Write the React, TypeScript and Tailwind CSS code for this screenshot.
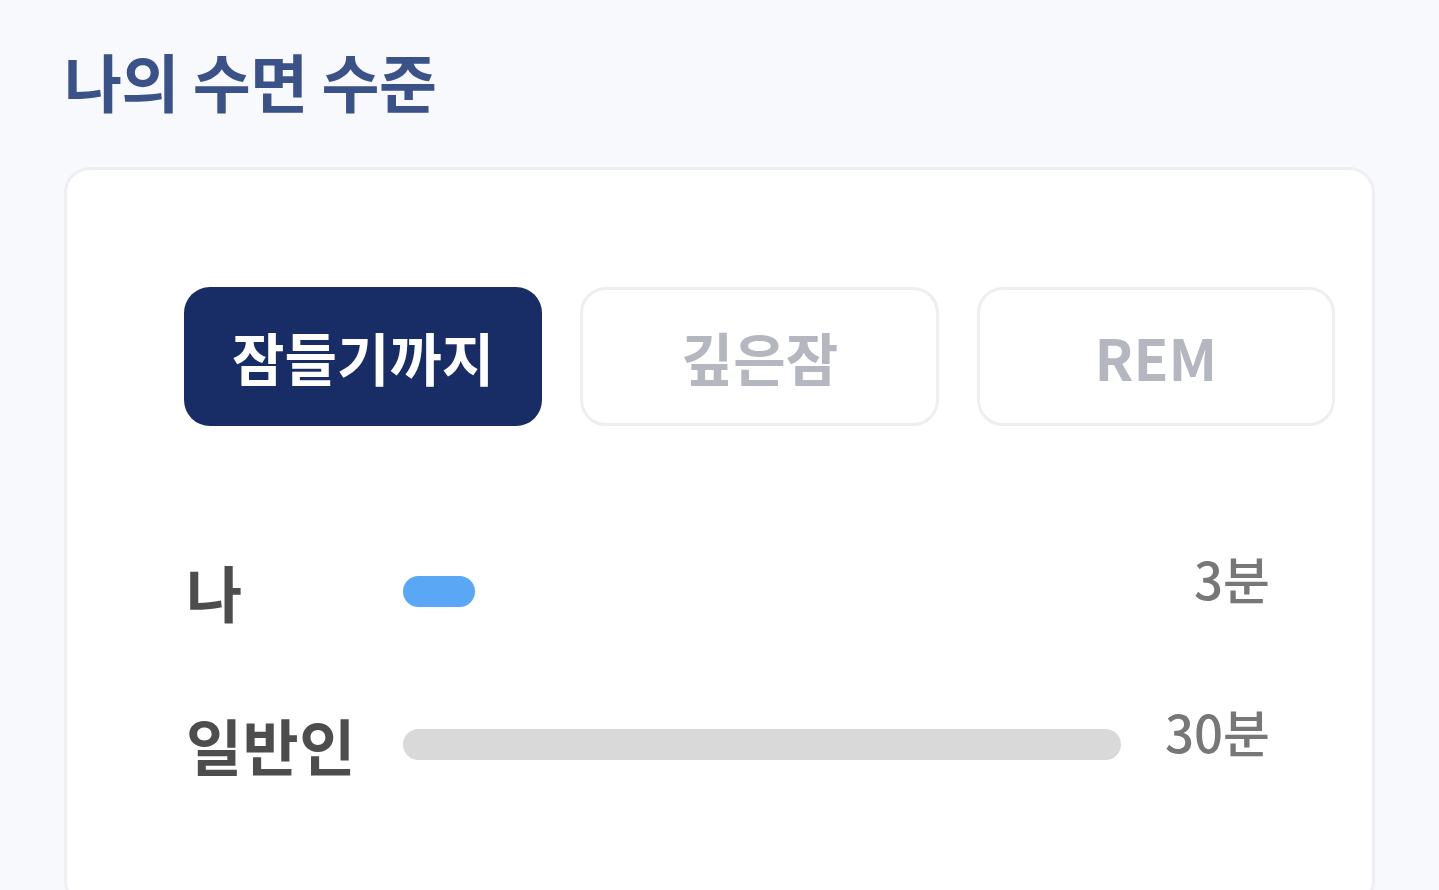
import React from "react";

const tabs = ["잠들기까지", "깊은잠", "REM"];

const rows = [
  { label: "나", minutes: 3, color: "bg-[#5aa7f5]" },
  { label: "일반인", minutes: 30, color: "bg-[#d9d9d9]" },
];

const MAX = 30;

export default function App() {
  const active = 0;
  return (
    <div
      className="min-h-[890px] w-full bg-[#f8f9fc] px-[64px] pt-[40px]"
      style={{ fontFamily: '"Noto Sans CJK KR", "Noto Sans", sans-serif' }}
    >
      <h1 className="text-[63px] font-bold leading-[80px] tracking-[-0.5px] text-[#3a5288]">
        나의 수면 수준
      </h1>

      <div className="mt-[47px] h-[740px] rounded-[26px] border-[3px] border-[#eeeff3] bg-white pl-[117px] pr-[37px] pt-[117px]">
        <div className="grid grid-cols-3 gap-[38px]">
          {tabs.map((t, i) => (
            <button
              key={t}
              className={
                i === active
                  ? "flex h-[139px] items-center justify-center rounded-[26px] bg-[#182c66] text-[57px] font-bold text-white"
                  : "flex h-[139px] items-center justify-center rounded-[26px] border-[3px] border-[#eceef2] bg-white text-[57px] font-bold text-[#b4b7c0]"
              }
            >
              {t}
            </button>
          ))}
        </div>

        <div className="mt-[131px] flex flex-col gap-[85px] pr-[65px]">
          {rows.map((r) => (
            <div key={r.label} className="flex h-[68px] items-center">
              <div className="w-[219px] shrink-0 pl-[2px] text-[61px] font-bold leading-none tracking-[0.5px] text-[#4d4d4d]">
                {r.label}
              </div>
              <div className="flex-1">
                <div
                  className={`h-[31px] rounded-full ${r.color}`}
                  style={{ width: `${(r.minutes / MAX) * 100}%` }}
                />
              </div>
              <div className="w-[149px] shrink-0 -translate-y-[13px] text-right text-[51px] font-medium leading-none text-[#777777]">
                {r.minutes}분
              </div>
            </div>
          ))}
        </div>
      </div>
    </div>
  );
}
